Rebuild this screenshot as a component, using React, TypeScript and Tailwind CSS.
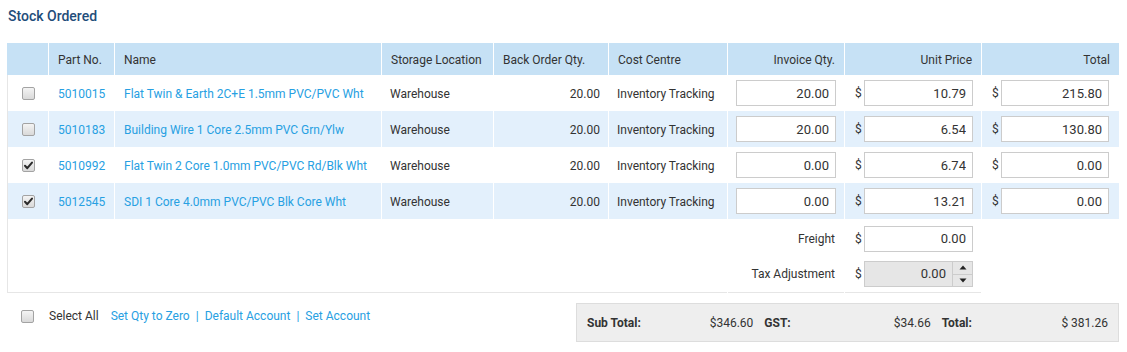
import React from "react";

const COLS =
  "grid grid-cols-[41px_65px_266px_111px_114px_118px_116px_136px_137px] gap-x-px";

function Check({ checked }: { checked?: boolean }) {
  return (
    <span className="relative inline-block h-[13px] w-[13px] rounded-[2px] border border-[#a3a3a3] bg-gradient-to-b from-[#f4f4f4] to-[#d9d9d9]">
      {checked && (
        <svg
          viewBox="0 0 13 13"
          className="absolute left-[-1px] top-[-1px] h-[13px] w-[13px]"
        >
          <path
            d="M3 6.8 L5.3 9.2 L10 3.6"
            fill="none"
            stroke="#2b2b2b"
            strokeWidth="2"
            strokeLinecap="round"
            strokeLinejoin="round"
          />
        </svg>
      )}
    </span>
  );
}

function Field({ value, w = "w-[100px]" }: { value: string; w?: string }) {
  return (
    <input
      readOnly
      value={value}
      className={`${w} h-[26px] border border-[#cccccc] bg-white pr-[6px] text-right text-[13px] text-[#333] outline-none`}
    />
  );
}

const rows = [
  {
    part: "5010015",
    name: "Flat Twin & Earth 2C+E 1.5mm PVC/PVC Wht",
    qty: "20.00",
    price: "10.79",
    total: "215.80",
    checked: false,
  },
  {
    part: "5010183",
    name: "Building Wire 1 Core 2.5mm PVC Grn/Ylw",
    qty: "20.00",
    price: "6.54",
    total: "130.80",
    checked: false,
  },
  {
    part: "5010992",
    name: "Flat Twin 2 Core 1.0mm PVC/PVC Rd/Blk Wht",
    qty: "0.00",
    price: "6.74",
    total: "0.00",
    checked: true,
  },
  {
    part: "5012545",
    name: "SDI 1 Core 4.0mm PVC/PVC Blk Core Wht",
    qty: "0.00",
    price: "13.21",
    total: "0.00",
    checked: true,
  },
];

export default function App() {
  const link = "text-[#27a0e2]";
  return (
    <div className="min-h-[352px] bg-white pl-[7px] pr-[8px] font-['Roboto',sans-serif] text-[12px] text-[#333]">
      <div className="pl-[1px] pt-[6px] text-[14px] font-medium leading-[20px] text-[#1f4d7a]">
        Stock Ordered
      </div>

      <div className="mt-[17px]">
        {/* header */}
        <div className={`${COLS} h-[32px] bg-white`}>
          {[
            ["", "left"],
            ["Part No.", "left"],
            ["Name", "left"],
            ["Storage Location", "left"],
            ["Back Order Qty.", "left"],
            ["Cost Centre", "left"],
            ["Invoice Qty.", "right"],
            ["Unit Price", "right"],
            ["Total", "right"],
          ].map(([t, a], i) => (
            <div
              key={i}
              className={`flex items-center bg-[#c6e1f5] pt-[1px] ${
                a === "right" ? "justify-end pr-[9px]" : "pl-[9px]"
              }`}
            >
              {t}
            </div>
          ))}
        </div>

        {/* body rows */}
        {rows.map((r, i) => {
          const bg = i % 2 === 1 ? "bg-[#e3f0fc]" : "bg-white";
          return (
            <div key={i} className={`${COLS} h-[36px] bg-white`}>
              <div
                className={`${bg} flex items-center justify-center border-l border-[#e6e6e6]`}
              >
                <Check checked={r.checked} />
              </div>
              <div className={`${bg} flex items-center pl-[9px] pt-[1px] ${link}`}>
                {r.part}
              </div>
              <div className={`${bg} flex items-center pl-[9px] pt-[1px] ${link}`}>
                {r.name}
              </div>
              <div className={`${bg} flex items-center pl-[8px] pt-[1px]`}>
                Warehouse
              </div>
              <div className={`${bg} flex items-center justify-end pr-[8px] pt-[1px]`}>
                20.00
              </div>
              <div className={`${bg} flex items-center pl-[8px] pt-[1px]`}>
                Inventory Tracking
              </div>
              <div className={`${bg} flex items-center pl-[8px]`}>
                <Field value={r.qty} />
              </div>
              <div className={`${bg} flex items-center pl-[10px]`}>
                <span className="w-[9px]">$</span>
                <Field value={r.price} w="w-[109px]" />
              </div>
              <div className={`${bg} flex items-center pl-[10px]`}>
                <span className="w-[9px]">$</span>
                <Field value={r.total} w="w-[108px]" />
              </div>
            </div>
          );
        })}

        {/* freight */}
        <div className={`${COLS} h-[37px] bg-white`}>
          <div className="col-span-6 border-l border-[#e6e6e6]" />
          <div className="flex items-center justify-end pr-[9px] pt-[2px]">
            Freight
          </div>
          <div className="flex items-center pl-[10px] pt-[2px]">
            <span className="w-[9px]">$</span>
            <Field value="0.00" w="w-[109px]" />
          </div>
          <div />
        </div>

        {/* tax */}
        <div className={`${COLS} h-[37px] bg-white`}>
          <div className="col-span-6 border-b border-l border-[#e6e6e6]" />
          <div className="flex items-center justify-end border-b border-[#e6e6e6] pr-[9px]">
            Tax Adjustment
          </div>
          <div className="flex items-center border-b border-[#e6e6e6] pl-[10px]">
            <span className="w-[9px]">$</span>
            <div className="flex h-[26px] w-[109px] border border-[#cccccc] bg-[#e6e6e6]">
              <div className="flex flex-1 items-center justify-end pr-[6px] text-[13px]">
                0.00
              </div>
              <div className="flex w-[20px] flex-col border-l border-[#cccccc]">
                <div className="flex flex-1 items-center justify-center border-b border-[#cccccc]">
                  <svg viewBox="0 0 8 5" className="h-[5px] w-[8px]">
                    <path d="M4 0.5 L7.5 4.5 L0.5 4.5 Z" fill="#222" />
                  </svg>
                </div>
                <div className="flex flex-1 items-center justify-center">
                  <svg viewBox="0 0 8 5" className="h-[5px] w-[8px]">
                    <path d="M0.5 0.5 L7.5 0.5 L4 4.5 Z" fill="#222" />
                  </svg>
                </div>
              </div>
            </div>
          </div>
          <div />
        </div>
      </div>

      {/* footer */}
      <div className="mt-[10px] flex items-start justify-between">
        <div className="flex h-[26px] items-center">
          <div className="flex w-[41px] justify-center">
            <Check />
          </div>
          <span className="ml-[1px]">Select All</span>
          <span className={`ml-[12px] ${link}`}>Set Qty to Zero</span>
          <span className={`mx-[6px] ${link}`}>|</span>
          <span className={link}>Default Account</span>
          <span className={`mx-[6px] ${link}`}>|</span>
          <span className={link}>Set Account</span>
        </div>
        <div className="flex h-[39px] w-[543px] items-center gap-[11px] border border-[#dddddd] bg-[#eeeeee] px-[10px]">
          <div className="flex flex-1 justify-between">
            <span className="font-bold">Sub Total:</span>
            <span>$346.60</span>
          </div>
          <div className="flex flex-1 justify-between">
            <span className="font-bold">GST:</span>
            <span>$34.66</span>
          </div>
          <div className="flex flex-1 justify-between">
            <span className="font-bold">Total:</span>
            <span>$ 381.26</span>
          </div>
        </div>
      </div>
    </div>
  );
}
